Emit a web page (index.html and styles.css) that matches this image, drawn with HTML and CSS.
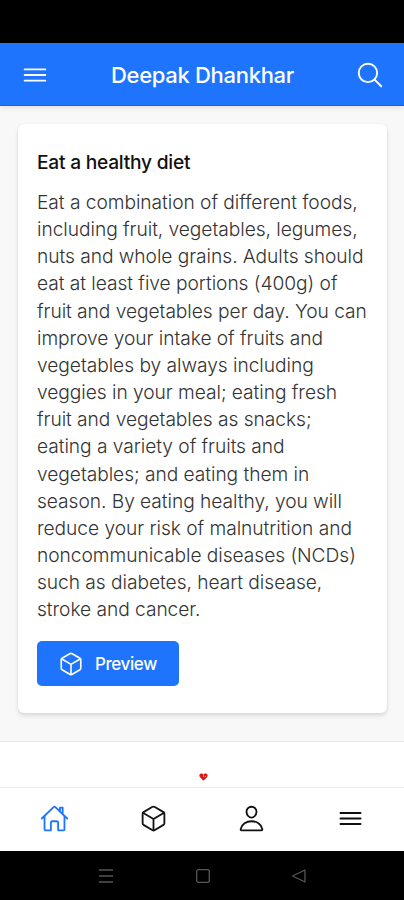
FILE: index.html
```html
<!DOCTYPE html>
<html lang="en">
<head>
<meta charset="utf-8">
<title>Deepak Dhankhar</title>
<link rel="stylesheet" href="styles.css">
</head>
<body>
<svg class="defs" width="0" height="0">
  <symbol id="cube" viewBox="0 0 512 512"><path d="M448 341.37V170.61A32 32 0 00432.11 143l-152-88.46a47.94 47.94 0 00-48.24 0L79.89 143A32 32 0 0064 170.61v170.76A32 32 0 0079.89 369l152 88.46a48 48 0 0048.24 0l152-88.46A32 32 0 00448 341.37z"/><path d="M69 153.99l187 110 187-110M256 463.99v-200"/></symbol>
  <symbol id="menu" viewBox="0 0 512 512"><path d="M80 160h352M80 256h352M80 352h352"/></symbol>
</svg>
<div class="status-bar"></div>
<header class="header">
  <svg class="icon header-icon"><use href="#menu"/></svg>
  <h1 class="header-title">Deepak Dhankhar</h1>
  <svg class="icon header-icon" viewBox="0 0 512 512"><path d="M221.09 64a157.09 157.09 0 10157.09 157.09A157.1 157.1 0 00221.09 64z"/><path d="M338.29 338.29L448 448"/></svg>
</header>
<main class="content">
  <article class="card">
    <h2 class="card-title">Eat a healthy diet</h2>
    <p class="card-text">Eat a combination of different foods,<br>including fruit, vegetables, legumes,<br>nuts and whole grains. Adults should<br>eat at least five portions (400g) of<br>fruit and vegetables per day. You can<br>improve your intake of fruits and<br>vegetables by always including<br>veggies in your meal; eating fresh<br>fruit and vegetables as snacks;<br>eating a variety of fruits and<br>vegetables; and eating them in<br>season. By eating healthy, you will<br>reduce your risk of malnutrition and<br>noncommunicable diseases (NCDs)<br>such as diabetes, heart disease,<br>stroke and cancer.</p>
    <a class="button"><svg class="icon button-icon"><use href="#cube"/></svg><span>Preview</span></a>
  </article>
</main>
<footer class="footer">
  <svg class="heart" viewBox="0 0 9 8"><path d="M4.5 7.7L1 4.3C-.4 2.5.7.5 2.3.5c1 0 1.7.5 2.2 1.1C5 1 5.7.5 6.7.5c1.6 0 2.7 2 1.3 3.8z" fill="#d51c1c"/><path d="M4.5 2.2v1.6M6.4 3v1" stroke="#ffc5b5" stroke-width=".8"/></svg>
</footer>
<nav class="tabs">
  <a class="tab tab-active"><svg class="icon tab-icon" viewBox="0 0 512 512"><path d="M80 212v236a16 16 0 0016 16h96V328a24 24 0 0124-24h80a24 24 0 0124 24v136h96a16 16 0 0016-16V212"/><path d="M480 256L266.89 52c-5-5.28-16.69-5.34-21.78 0L32 256M400 179V64h-48v69"/></svg></a>
  <a class="tab"><svg class="icon tab-icon"><use href="#cube"/></svg></a>
  <a class="tab"><svg class="icon tab-icon" viewBox="0 0 512 512"><path d="M344 144c-3.92 52.87-44 96-88 96s-84.15-43.12-88-96c-4-55 35-96 88-96s92 42 88 96z"/><path d="M256 304c-87 0-175.3 48-191.64 138.6C62.39 453.52 68.57 464 80 464h352c11.44 0 17.62-10.48 15.65-21.4C431.3 352 343 304 256 304z"/></svg></a>
  <a class="tab"><svg class="icon tab-icon tab-menu"><use href="#menu"/></svg></a>
</nav>
<div class="system-nav">
  <svg class="system-icon" viewBox="0 0 16 16"><path d="M1 2h14M1 8h14M1 14h14"/></svg>
  <svg class="system-icon" viewBox="0 0 16 16"><rect x="1.7" y="1.7" width="12.6" height="12.6" rx="2"/></svg>
  <svg class="system-icon" viewBox="0 0 16 16"><path d="M14 2v12L1.5 8z"/></svg>
</div>
</body>
</html>
```
FILE: styles.css
```css
* { box-sizing: border-box; }
body {
  margin: 0;
  width: 404px;
  height: 900px;
  display: flex;
  flex-direction: column;
  overflow: hidden;
  background: #f8f8f8;
  color: #111;
  font-family: Inter, sans-serif;
}
h1, h2, p { margin: 0; }
.defs { position: absolute; }
.icon {
  fill: none;
  stroke: currentColor;
  stroke-width: 32;
  stroke-linecap: round;
  stroke-linejoin: round;
}
.status-bar { height: 43px; background: #000; }
.header {
  height: 63px;
  padding: 2px 19px 0 20px;
  display: flex;
  align-items: center;
  justify-content: space-between;
  background: #1e74fd;
  color: #fff;
  border-bottom: 1px solid #0b62ee;
  box-shadow: 0 2px 6px rgba(0, 0, 0, .09);
}
.header-icon { width: 30px; height: 30px; }
.header-title { font-size: 22px; font-weight: 500; line-height: 30px; letter-spacing: -.31px; white-space: nowrap; }
.content { height: 635px; padding: 18px 17px 0 18px; }
.card {
  height: 589px;
  padding: 24px 18px 0 19px;
  background: #fff;
  border-radius: 6px;
  box-shadow: 0 3px 4px rgba(0, 0, 0, .11), 0 0 2px rgba(0, 0, 0, .08);
}
.card-title { font-size: 19.2px; font-weight: 500; line-height: 28px; letter-spacing: -.24px; white-space: nowrap; }
.card-text {
  margin-top: 13px;
  font-size: 19.2px;
  font-weight: 300;
  line-height: 27.15px;
  letter-spacing: -.05px;
  color: #333;
  white-space: nowrap;
}
.button {
  width: 142px;
  height: 45px;
  margin-top: 17.5px;
  display: flex;
  align-items: center;
  padding-left: 21px;
  gap: 11px;
  border-radius: 5px;
  background: #1e74fd;
  color: #fff;
  font-size: 17px;
  font-weight: 500;
  letter-spacing: -.4px;
}
.button-icon { width: 26px; height: 26px; }
.footer {
  height: 46px;
  display: flex;
  justify-content: center;
  align-items: flex-end;
  padding: 0 0 6px 2px;
  background: #fff;
  border-top: 1px solid #e8e8e8;
}
.heart { width: 9px; height: 8px; }
.tabs {
  height: 64px;
  padding: 0 4px 2px 5px;
  display: flex;
  background: #fff;
  border-top: 1px solid #eee;
}
.tab { flex: 1; display: flex; align-items: center; justify-content: center; }
.tab-active { color: #1e74fd; }
.tab-icon { width: 29px; height: 29px; }
.tab-menu { stroke-width: 36; }
.system-nav {
  height: 49px;
  padding: 0 97px 0 98px;
  display: flex;
  align-items: center;
  justify-content: space-between;
  background: #000;
}
.system-icon { width: 16px; height: 16px; fill: none; stroke: #555; stroke-width: 1.3; stroke-linejoin: round; }
```
